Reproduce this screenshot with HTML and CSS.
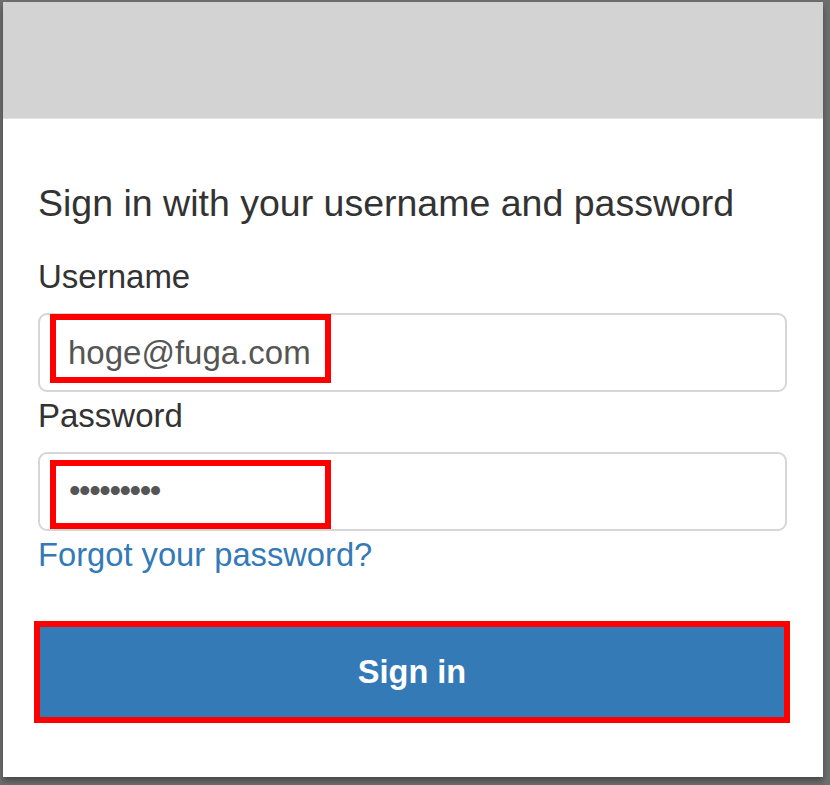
FILE: index.html
```html
<!DOCTYPE html>
<html lang="en">
<head>
<meta charset="utf-8">
<title>Sign in</title>
<link rel="stylesheet" href="styles.css">
</head>
<body>
<div class="panel">
  <div class="banner"></div>
  <form class="form" onsubmit="return false">
    <h1 class="title">Sign in with your username and password</h1>
    <label class="label" for="username">Username</label>
    <div class="field">
      <input class="input" id="username" type="text" value="hoge@fuga.com" readonly>
      <span class="mark"></span>
    </div>
    <label class="label" for="password">Password</label>
    <div class="field">
      <div class="input input-pass" id="password">•••••••••</div>
      <span class="mark mark-low"></span>
    </div>
    <a class="forgot" href="#">Forgot your password?</a>
    <div class="btn-mark">
      <button class="btn" type="submit">Sign in</button>
    </div>
  </form>
</div>
</body>
</html>
```
FILE: styles.css
```css
html, body {
  margin: 0;
  padding: 0;
}
body {
  background: #6e6e6e;
  width: 830px;
  height: 785px;
  overflow: hidden;
  font-family: "Liberation Sans", Arial, sans-serif;
  color: #333;
}
.panel {
  margin: 2px 0 0 3px;
  width: 820px;
  height: 775px;
  background: #fff;
  box-shadow: 0 4px 6px rgba(0, 0, 0, 0.35);
}
.banner {
  height: 116px;
  background: #d3d3d3;
  border-bottom: 1px solid #e2e2e2;
}
.form {
  display: flex;
  flex-direction: column;
  padding: 0 33px 0 35px;
}
.title {
  margin: 61.5px 0 0;
  font-size: 37.5px;
  line-height: 45px;
  font-weight: normal;
  color: #333;
}
.label {
  font-size: 33px;
  line-height: 47px;
  color: #333;
}
.title + .label {
  margin-top: 27.5px;
}
.field {
  position: relative;
  margin-top: 13px;
}
.input {
  display: block;
  box-sizing: border-box;
  width: 749px;
  height: 79px;
  margin: 0;
  padding: 0 0 0 28px;
  border: 2px solid #d6d6d6;
  border-radius: 9px;
  background: #fff;
  font-family: "Liberation Sans", Arial, sans-serif;
  font-size: 33px;
  color: #555;
  outline: none;
}
.input-pass {
  display: flex;
  align-items: center;
  padding-left: 29px;
  padding-bottom: 2px;
  font-size: 33px;
  letter-spacing: -1.45px;
  color: #555;
}
.mark {
  position: absolute;
  left: 12px;
  top: 1px;
  width: 281px;
  height: 69px;
  box-sizing: border-box;
  border: 6px solid #ff0000;
}
.mark-low {
  top: 8px;
}
.field + .label {
  margin-top: 0;
}
.forgot {
  font-size: 32.7px;
  line-height: 47px;
  color: #337ab7;
  text-decoration: none;
  align-self: flex-start;
}
.btn-mark {
  margin: 43px 0 0 -4px;
  width: 756px;
  box-sizing: border-box;
  border: 6px solid #ff0000;
}
.btn {
  display: block;
  width: 100%;
  height: 90px;
  margin: 0;
  padding: 0;
  border: none;
  background: #337ab7;
  color: #fff;
  font-family: "Liberation Sans", Arial, sans-serif;
  font-size: 32.5px;
  font-weight: bold;
  cursor: pointer;
}
```
